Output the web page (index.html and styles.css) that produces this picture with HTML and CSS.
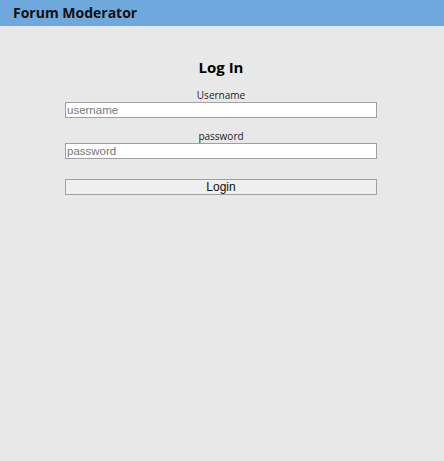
FILE: index.html
```html
<!DOCTYPE html>
<html>
<head>
<meta charset="utf-8">
<link rel="stylesheet" href="styles.css">
</head>
<body>
<header class="topbar">Forum Moderator</header>
<main class="login">
  <h1 class="title">Log In</h1>
  <form class="form">
    <label class="label" for="u">Username</label>
    <input class="field" id="u" type="text" placeholder="username">
    <label class="label label-pw" for="p">password</label>
    <input class="field" id="p" type="password" placeholder="password">
    <button class="btn" type="button">Login</button>
  </form>
</main>
</body>
</html>
```

FILE: styles.css
```css
html, body {
  margin: 0;
  padding: 0;
  height: 100%;
}
body {
  background: #e8e8e8;
  font-family: "Open Sans", "Noto Sans", sans-serif;
  color: #222;
}
.topbar {
  background: #6fa8dc;
  height: 26px;
  line-height: 25px;
  padding-left: 13px;
  font-weight: 700;
  font-size: 14px;
  color: #111;
}
.login {
  width: 312px;
  margin: 0 auto;
  display: flex;
  flex-direction: column;
  position: relative;
  left: -1px;
}
.title {
  margin: 31px 0 0;
  text-align: center;
  font-size: 15px;
  font-weight: 700;
  line-height: 20px;
  color: #000;
}
.form {
  display: flex;
  flex-direction: column;
}
.label {
  text-align: center;
  font-size: 10px;
  line-height: 14px;
  margin-top: 11px;
  color: #222;
}
.label-pw {
  margin-top: 11px;
}
.field {
  box-sizing: border-box;
  height: 16px;
  margin: 0;
  padding: 0 1px;
  border: 1px solid #a0a0a0;
  background: #fff;
  font-family: "Liberation Sans", Arial, sans-serif;
  font-size: 11.5px;
  color: #222;
  outline: none;
}
.field::placeholder {
  color: #777;
}
.btn {
  box-sizing: border-box;
  margin-top: 20px;
  height: 16px;
  padding: 0;
  border: 1px solid #a0a0a0;
  background: #efefef;
  font-family: "Liberation Sans", Arial, sans-serif;
  font-size: 12px;
  color: #111;
}
```
